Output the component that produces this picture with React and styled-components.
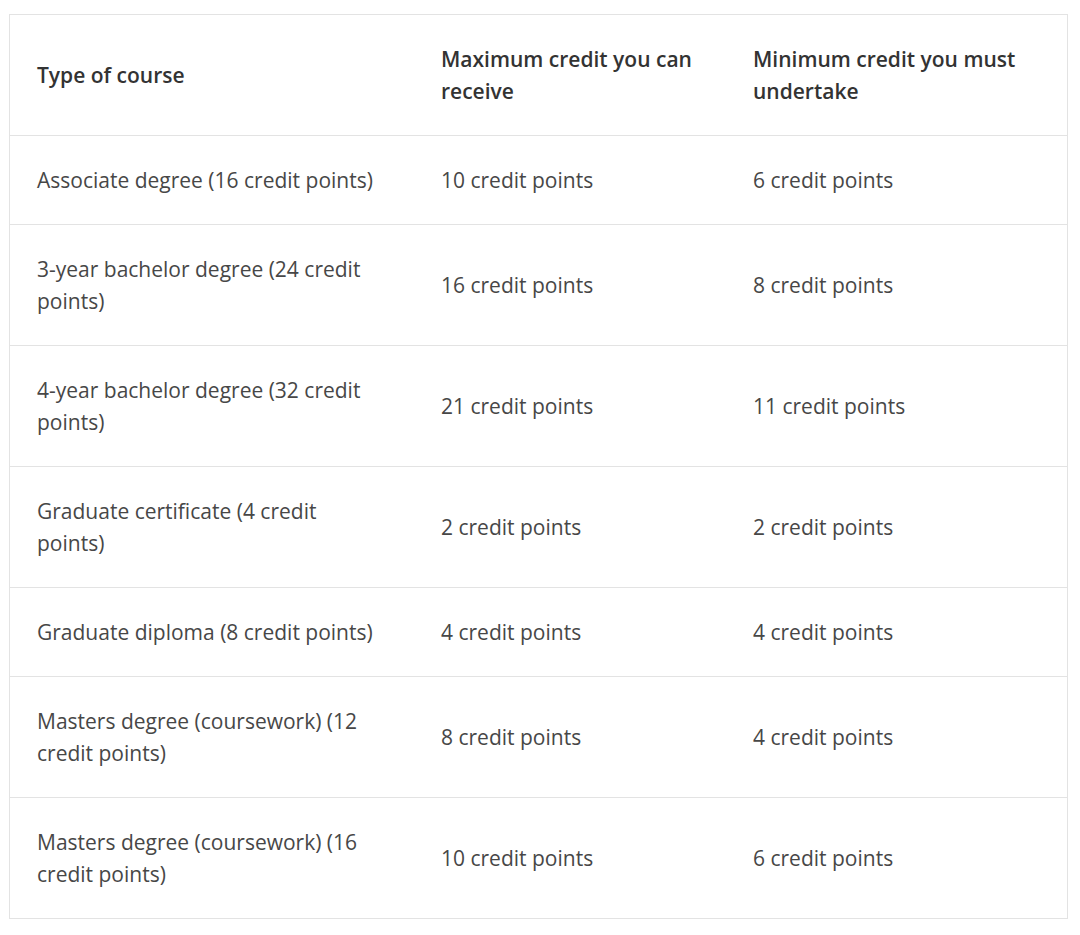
import React from "react";
import styled, { createGlobalStyle } from "styled-components";

const GlobalStyle = createGlobalStyle`
    body {
        margin: 0;
        background: #fff;
        font-family: "Open Sans", "Noto Sans", sans-serif;
    }
`;

const Page = styled.div`
    padding: 14px 12px 16px 9px;
`;

const Table = styled.div`
    width: 1059px;
    border: 1px solid #e3e3e3;
    box-sizing: border-box;
`;

const Row = styled.div`
    display: grid;
    grid-template-columns: 404px 312px 1fr;
    border-top: ${props => props.first ? "none" : "1px solid #e3e3e3"};
`;

const Cell = styled.div`
    padding: 28px 28px 28px 27px;
    display: flex;
    align-items: center;
    font-size: 21px;
    line-height: 32px;
    color: ${props => props.head ? "#333" : "#474747"};
    font-weight: ${props => props.head ? 600 : 400};
`;

const headers = [
    "Type of course",
    "Maximum credit you can receive",
    "Minimum credit you must undertake",
];

const rows = [
    ["Associate degree (16 credit points)", "10 credit points", "6 credit points"],
    ["3-year bachelor degree (24 credit points)", "16 credit points", "8 credit points"],
    ["4-year bachelor degree (32 credit points)", "21 credit points", "11 credit points"],
    ["Graduate certificate (4 credit points)", "2 credit points", "2 credit points"],
    ["Graduate diploma (8 credit points)", "4 credit points", "4 credit points"],
    ["Masters degree (coursework) (12 credit points)", "8 credit points", "4 credit points"],
    ["Masters degree (coursework) (16 credit points)", "10 credit points", "6 credit points"],
];

export default function App() {
    return (
        <Page>
            <GlobalStyle />
            <Table>
                <Row first>
                    {headers.map(h => (
                        <Cell head key={h}>{h}</Cell>
                    ))}
                </Row>
                {rows.map(row => (
                    <Row key={row[0]}>
                        {row.map((text, i) => (
                            <Cell key={i}>{text}</Cell>
                        ))}
                    </Row>
                ))}
            </Table>
        </Page>
    );
}
